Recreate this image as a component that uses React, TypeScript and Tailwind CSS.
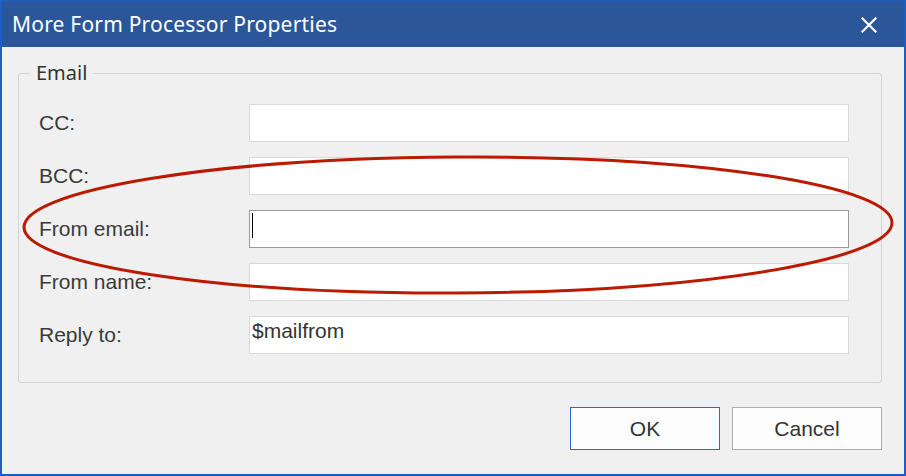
import React from "react";

const labelFont = { fontFamily: '"Liberation Sans", Arial, sans-serif' };

function Row({ label, value, focused }: { label: string; value?: string; focused?: boolean }) {
  return (
    <div className="flex items-center h-[38px]">
      <div className="w-[210px] text-[21px] leading-[24px] text-[#3a3a3a]" style={labelFont}>
        {label}
      </div>
      <div
        className={`relative w-[600px] h-[38px] bg-white border ${focused ? "border-[#9a9a9a]" : "border-[#d9d9d9]"} pl-[2px] pt-[2px] text-[21px] leading-[24px] text-[#333333]`}
        style={labelFont}
      >
        {value}
        {focused && <div className="absolute left-[2px] top-[2px] w-[1px] h-[25px] bg-black" />}
      </div>
    </div>
  );
}

export default function App() {
  return (
    <div className="relative w-[906px] h-[476px] flex flex-col border-2 border-t border-[#1b5fc4] bg-[#f0f0f0] overflow-hidden">
      <div className="h-[46px] bg-[#2b579a] flex items-center justify-between pl-[10px] pr-[27px] shrink-0">
        <span className="text-white text-[21px] leading-[28px] tracking-[0.2px]" style={{ fontFamily: '"Noto Sans", "Open Sans", sans-serif' }}>
          More Form Processor Properties
        </span>
        <svg width="16" height="16" viewBox="0 0 16 16" className="mt-[1px]">
          <path d="M1.5 1.5 L14.5 14.5 M14.5 1.5 L1.5 14.5" stroke="white" strokeWidth="2.2" strokeLinecap="square" />
        </svg>
      </div>
      <div className="flex-1 flex flex-col pl-[16px] pt-[26px]">
        <div className="relative w-[864px] h-[310px] border border-[#d4d4d4] rounded-[3px] pl-[20px] pt-[30px] flex flex-col gap-[15px]">
          <span
            className="absolute top-[-15px] left-[11px] px-[6px] bg-[#f0f0f0] text-[20px] leading-[28px] text-[#333333]"
            style={{ fontFamily: '"Noto Sans", "Open Sans", sans-serif' }}
          >
            Email
          </span>
          <Row label="CC:" />
          <Row label="BCC:" />
          <Row label="From email:" focused />
          <Row label="From name:" />
          <Row label="Reply to:" value="$mailfrom" />
        </div>
        <div className="flex justify-end gap-[12px] mt-[24px] pr-[22px]">
          <button
            className="w-[150px] h-[43px] bg-[#fdfdfd] border border-[#1f6fd1] text-[21px] text-[#333333] flex items-center justify-center"
            style={labelFont}
          >
            OK
          </button>
          <button
            className="w-[150px] h-[43px] bg-[#fdfdfd] border border-[#adadad] text-[21px] text-[#333333] flex items-center justify-center"
            style={labelFont}
          >
            Cancel
          </button>
        </div>
      </div>
      <svg
        className="absolute pointer-events-none"
        style={{ left: -2, top: -1 }}
        width="906"
        height="476"
        viewBox="0 0 906 476"
      >
        <ellipse cx="458" cy="225" rx="434" ry="68" fill="none" stroke="#bb1a00" strokeWidth="3" transform="rotate(-0.3 458 225)" />
      </svg>
    </div>
  );
}
